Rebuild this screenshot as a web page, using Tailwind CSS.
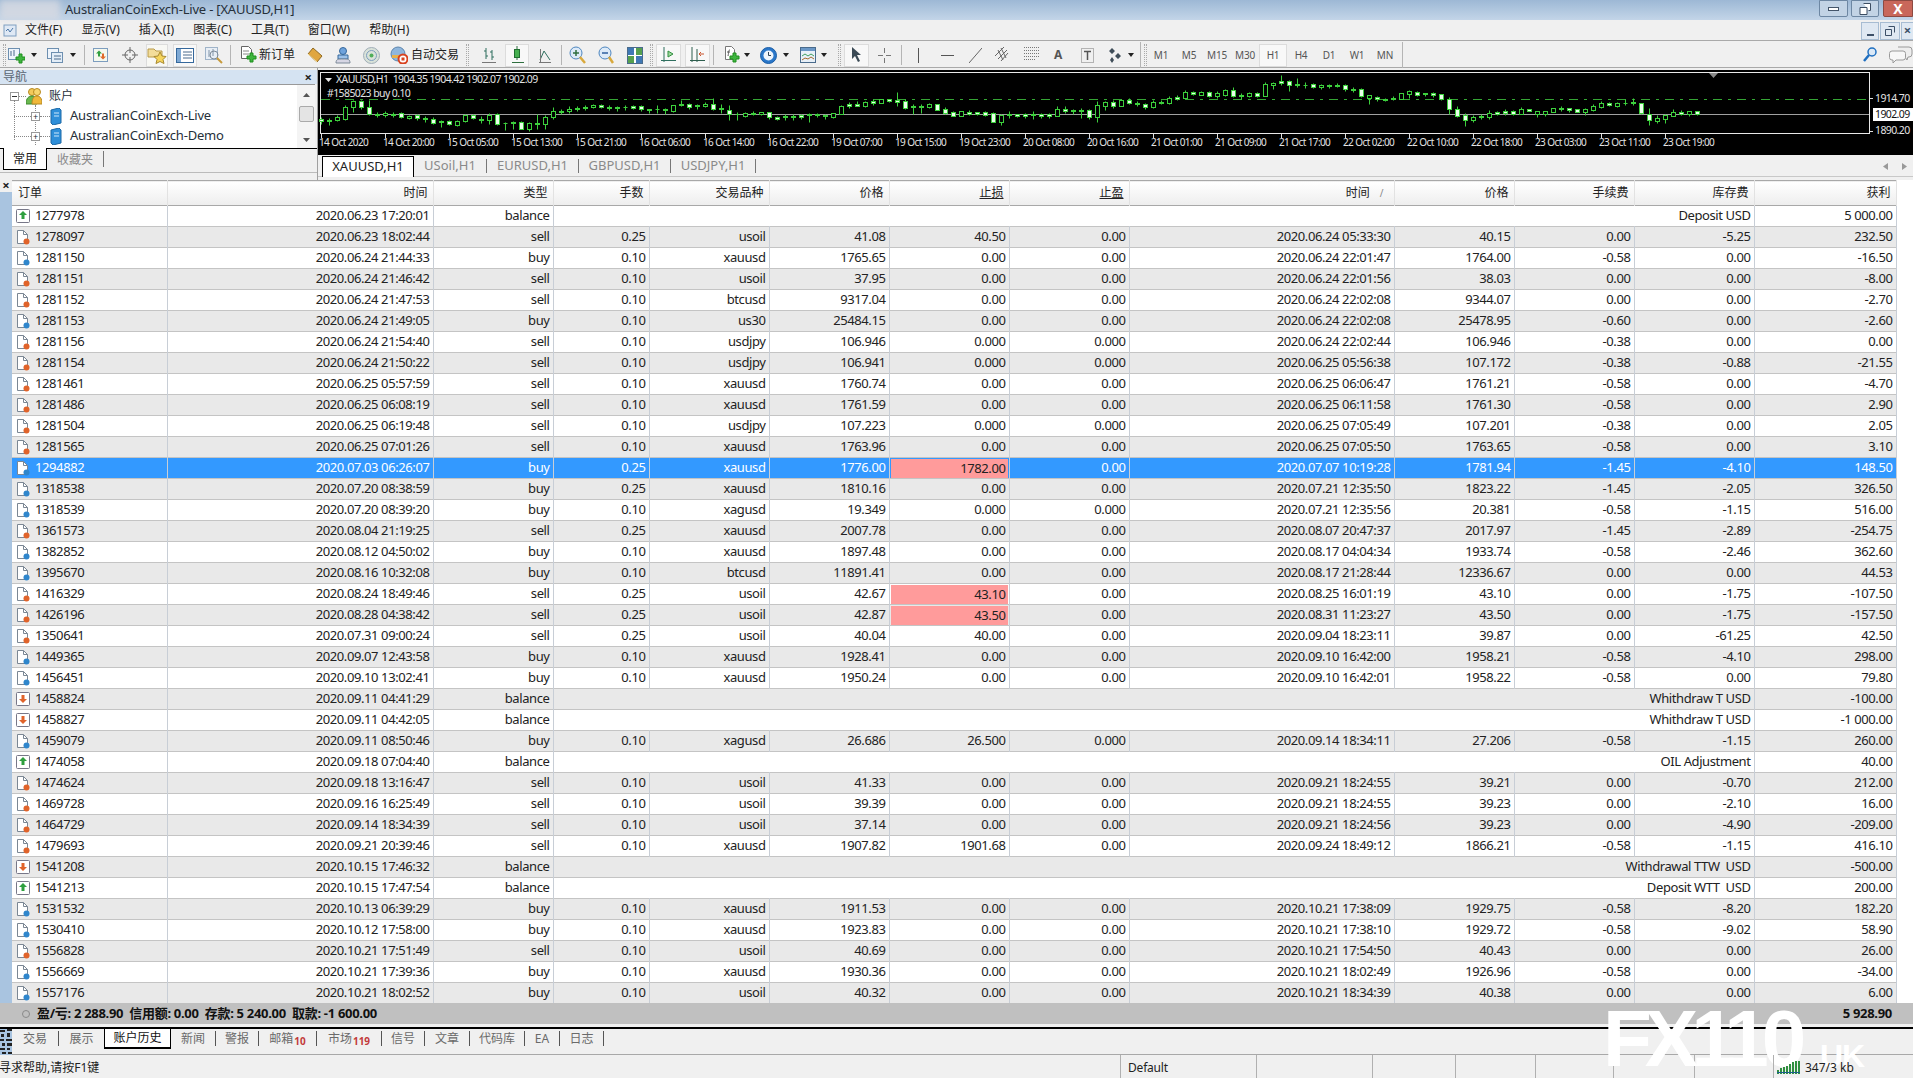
<!DOCTYPE html>
<html lang="zh">
<head>
<meta charset="UTF-8" />
<title>AustralianCoinExch-Live - [XAUUSD,H1]</title>
<script src="https://cdn.jsdelivr.net/npm/@tailwindcss/browser@4"></script>
</head>
<body class="bg-[#f0f0f0] w-[1913px] h-[1078px] overflow-hidden relative font-['Noto_Sans','Noto_Sans_CJK_SC',sans-serif] text-[13px] text-[#222]">

  <!-- title bar -->
  <div class="h-[20px] flex items-center bg-gradient-to-b from-[#9db8d5] to-[#c3d5e8] relative">
    <div class="w-[60px] h-[20px] bg-[#d8dbe2]/80 blur-[3px]"></div>
    <span class="ml-[5px] tracking-[-0.2px] text-[#26303a]">AustralianCoinExch-Live - [XAUUSD,H1]</span>
    <div class="ml-auto flex h-[17px] self-start">
      <div class="w-[29px] border border-[#6d87a3] rounded-b-[2px] bg-[#c2d3e5] flex items-center justify-center"><div class="w-[11px] h-[4px] border border-[#44556a] bg-white"></div></div>
      <div class="ml-[3px] w-[28px] border border-[#6d87a3] rounded-b-[2px] bg-[#c2d3e5] flex items-center justify-center">
        <svg width="12" height="12"><path d="M4.5 .5h7v7h-2M1 4.500h7v7H1z" fill="#fff" stroke="#3c4d62"/></svg>
      </div>
      <div class="ml-[4px] w-[30px] border border-[#8d4a42] rounded-bl-[2px] bg-[#c9675a] flex items-center justify-center text-white font-bold text-[14px] leading-none">X</div>
    </div>
  </div>

  <!-- menu -->
  <div class="h-[20px] flex items-center bg-[#f0f0f0] text-[12px]">
    <svg class="ml-[3px]" width="14" height="14"><rect x="1" y="2" width="12" height="11" fill="#dfe9f5" stroke="#7d9dbf"/><path d="M3 8l2-2 2 3 3-4" fill="none" stroke="#4d78a8"/></svg>
    <span class="ml-[8px]">文件(F)</span>
    <span class="ml-[19px]">显示(V)</span>
    <span class="ml-[19px]">插入(I)</span>
    <span class="ml-[19px]">图表(C)</span>
    <span class="ml-[19px]">工具(T)</span>
    <span class="ml-[19px]">窗口(W)</span>
    <span class="ml-[19px]">帮助(H)</span>
    <div class="ml-auto flex h-[18px] mt-[1px]">
      <div class="w-[18px] border border-[#a7bcd2] bg-[#dfe8f2] flex items-end justify-center pb-[3px]"><div class="w-[7px] h-[2px] bg-[#3d5068]"></div></div>
      <div class="ml-[1px] w-[20px] border border-[#a7bcd2] bg-[#dfe8f2] flex items-center justify-center"><svg width="10" height="10"><path d="M3.500 .5h6v6M.5 3.500h6v6h-6z" fill="none" stroke="#3d5068"/></svg></div>
      <div class="ml-[1px] w-[12px] border-l border-y border-[#a7bcd2] bg-[#dfe8f2] flex items-center justify-center font-bold text-[13px] leading-none text-[#3d5068]">×</div>
    </div>
  </div>

  <!-- toolbar -->
  <div class="h-[28px] pt-[2px] border-y border-[#a9a9a9] flex items-center bg-[#f0f0f0] text-[12px] text-[#222]">
    <div class="ml-[3px] w-[3px] h-[22px] border-x border-dotted border-[#aaa]"></div>
    <svg class="ml-[2px]" width="17" height="17"><rect x=".5" y="1.500" width="11" height="11" fill="#eef4fb" stroke="#6d8fb0"/><path d="M3 4v5M6 3v6" stroke="#4a6b8c"/><path d="M11 7v3H8v3h3v3h3v-3h3v-3h-3V7z" fill="#3fb53f" stroke="#1f8f1f"/></svg>
    <svg class="ml-[6px]" width="6" height="4"><path d="M0 0h6L3 4z" fill="#222"/></svg>
    <svg class="ml-[10px]" width="16" height="17"><rect x=".5" y="1.500" width="11" height="10" fill="#eef4fb" stroke="#6d8fb0"/><rect x="4.500" y="5.500" width="11" height="10" fill="#e3edf7" stroke="#6d8fb0"/><path d="M7 9h7M7 12h7" stroke="#4a6b8c"/></svg>
    <svg class="ml-[7px]" width="6" height="4"><path d="M0 0h6L3 4z" fill="#222"/></svg>
    <div class="ml-[8px] w-px h-[20px] bg-[#b5b5b5]"></div>
    <svg class="ml-[8px]" width="15" height="16"><rect x=".5" y="1.500" width="14" height="13" fill="#f4f8ee" stroke="#7d9dbf"/><path d="M6 3.500l-3 3h2v3h2v-3h2z" fill="#2f9f3f"/><path d="M10 12.500l3-3h-2v-3H9v3H7z" fill="#e06a2a"/></svg>
    <svg class="ml-[14px]" width="16" height="16" fill="none" stroke="#666"><circle cx="8" cy="8" r="5"/><path d="M8 0v6M8 10v6M0 8h6M10 8h6"/></svg>
    <div class="ml-[8px] w-[22px] h-[23px] border border-[#dcdcdc] bg-[#f8f8f4] flex items-center justify-center">
      <svg width="20" height="18"><path d="M1 3h6l2 2h6v6H1z" fill="#f3dd9a" stroke="#b89a4a"/><path d="M13 6l2 4 4 .5-3 3 1 4-4-2-4 2 1-4-3-3 4-.5z" fill="#f6d55c" stroke="#a8892f"/></svg>
    </div>
    <div class="ml-[5px] w-[24px] h-[23px] border border-[#dcdcdc] bg-[#f8f8f8] flex items-center justify-center">
      <svg width="18" height="15"><rect x=".5" y=".5" width="17" height="14" fill="#fff" stroke="#35689c"/><rect x="1" y="1" width="4" height="13" fill="#7fa9d4"/><path d="M7 4h9M7 7h9M7 10h9" stroke="#4a6b8c"/></svg>
    </div>
    <svg class="ml-[8px]" width="18" height="18" fill="none"><rect x=".5" y="1.500" width="12" height="12" fill="#e8eef5" stroke="#9fb3c8"/><path d="M4 4v7M8 3v7" stroke="#8094a8"/><circle cx="9" cy="9" r="4" stroke="#7d8a99"/><path d="M12 12l5 5" stroke="#c79a3c" stroke-width="2"/></svg>
    <div class="ml-[7px] w-px h-[20px] bg-[#b5b5b5]"></div>
    <svg class="ml-[9px]" width="17" height="18"><path d="M1.500 .5h7l3 3v9h-10z" fill="#fff" stroke="#666"/><path d="M3 5h6M3 8h6" stroke="#888"/><path d="M10 7v3H7v3h3v3h3v-3h3v-3h-3V7z" fill="#3fb53f" stroke="#1f8f1f"/></svg>
    <span class="ml-[2px] w-[37px] whitespace-nowrap">新订单</span>
    <svg class="ml-[11px]" width="16" height="16"><path d="M6 1l9 8-5 6-9-8z" fill="#e0a63f" stroke="#8f6a22"/><path d="M1 7l9 8" stroke="#f6e2a8"/></svg>
    <svg class="ml-[12px]" width="16" height="17"><circle cx="8" cy="4" r="3.500" fill="#6fa3dc" stroke="#35689c"/><path d="M3 8h10v4H3z" fill="#9cc2ea" stroke="#35689c"/><path d="M1 16c0-4 2-4 7-4s7 0 7 4z" fill="#d6d6e4" stroke="#7d8a99"/></svg>
    <svg class="ml-[12px]" width="17" height="17" fill="none"><circle cx="8.500" cy="8.500" r="8" fill="#d9e2d9" stroke="#a0aeb8"/><circle cx="8.500" cy="8.500" r="5" stroke="#7d9dbf"/><circle cx="8.500" cy="8.500" r="2" fill="#4fae5a"/></svg>
    <svg class="ml-[10px]" width="18" height="18"><circle cx="8" cy="8" r="7" fill="#8fb6dc" stroke="#5b84ad"/><path d="M2 9h13v3H2z" fill="#e8b14a"/><circle cx="13" cy="13" r="4.500" fill="#fff" stroke="#d8421f" stroke-width="2"/><rect x="11.500" y="11.500" width="3" height="3" fill="#d8421f"/></svg>
    <span class="ml-[3px] w-[47px] whitespace-nowrap">自动交易</span>
    <div class="ml-[8px] w-[3px] h-[22px] border-x border-dotted border-[#aaa]"></div>
    <svg class="ml-[13px]" width="14" height="18" fill="none" stroke="#2f6f5f"><path d="M4 2v11M2 5h2M4 10h2M10 4v10M8 6h2M10 11h2"/><path d="M0 16.500h14" stroke="#777"/></svg>
    <div class="ml-[9px] w-[24px] h-[23px] border border-[#dcdcdc] bg-[#f8f8f8] flex items-center justify-center">
      <svg width="14" height="18"><path d="M7 0v14M2 16.500h12" stroke="#2f6f3f"/><rect x="4.500" y="3.500" width="5" height="8" fill="#46b04f" stroke="#1f6f2f"/></svg>
    </div>
    <svg class="ml-[10px]" width="12" height="17" fill="none"><path d="M1 13l4-9 6 9" stroke="#2f6f5f"/><path d="M0 15.500h12M1.500 2v14" stroke="#777"/></svg>
    <div class="ml-[10px] w-px h-[20px] bg-[#b5b5b5]"></div>
    <svg class="ml-[7px]" width="17" height="18" fill="none"><circle cx="7" cy="7" r="6" fill="#dceaf8" stroke="#4e86bf"/><path d="M4 7h6M7 4v6" stroke="#2f6f3f" stroke-width="1.500"/><path d="M11 11l5 6" stroke="#d9a93c" stroke-width="2.500"/></svg>
    <svg class="ml-[12px]" width="16" height="18" fill="none"><circle cx="7" cy="7" r="6" fill="#dceaf8" stroke="#4e86bf"/><path d="M4 7h6" stroke="#2f5f9f" stroke-width="1.500"/><path d="M11 11l4 6" stroke="#d9a93c" stroke-width="2.500"/></svg>
    <svg class="ml-[13px]" width="16" height="17"><rect x=".5" y=".5" width="15" height="16" fill="#fff" stroke="#4a6b8c"/><rect x="1" y="1" width="6" height="7" fill="#3f78b5"/><rect x="9" y="1" width="6" height="7" fill="#55a04f"/><rect x="1" y="9" width="6" height="7" fill="#55a04f"/><rect x="9" y="9" width="6" height="7" fill="#3f78b5"/></svg>
    <div class="ml-[7px] w-[3px] h-[22px] border-x border-dotted border-[#aaa]"></div>
    <div class="ml-[3px] w-[25px] h-[23px] border border-[#dcdcdc] bg-[#f8f8f8] flex items-center justify-center">
      <svg width="15" height="16" fill="none"><path d="M3 0v15M0 13.500h15" stroke="#2f6f5f"/><path d="M7 4l5 3-5 3z" fill="#9fd89f" stroke="#2f8f3f"/></svg>
    </div>
    <div class="ml-[4px] w-[25px] h-[23px] border border-[#dcdcdc] bg-[#f8f8f8] flex items-center justify-center">
      <svg width="15" height="16" fill="none"><path d="M2 0v15M7 2v13M0 13.500h15" stroke="#2f5f4f"/><path d="M14 7H9M11 5L9 7l2 2" stroke="#c9552f"/></svg>
    </div>
    <div class="ml-[3px] w-px h-[20px] bg-[#b5b5b5]"></div>
    <svg class="ml-[10px]" width="16" height="18"><path d="M1.500 .5h6l3 3v10h-9z" fill="#fff" stroke="#777"/><path d="M6 4c-2 0-1 2-2 6M3 6h3" fill="none" stroke="#555"/><path d="M9 7v3H6v3h3v3h3v-3h3v-3h-3V7z" fill="#3fb53f" stroke="#1f8f1f"/></svg>
    <svg class="ml-[4px]" width="6" height="4"><path d="M0 0h6L3 4z" fill="#222"/></svg>
    <svg class="ml-[10px]" width="17" height="17" fill="none"><circle cx="8.500" cy="8.500" r="8" fill="#2a77c9" stroke="#1c5ea6"/><circle cx="8.500" cy="8.500" r="5" fill="#eef5fc"/><path d="M8.500 5v3.500H11" stroke="#345"/></svg>
    <svg class="ml-[6px]" width="6" height="4"><path d="M0 0h6L3 4z" fill="#222"/></svg>
    <svg class="ml-[11px]" width="16" height="16" fill="none"><rect x=".5" y=".5" width="15" height="15" fill="#e8f0f8" stroke="#4a6b8c"/><rect x="1" y="1" width="14" height="3" fill="#6a97c6"/><path d="M2 9l3-2 3 2 3-2 3 2" stroke="#3f9f5f"/><path d="M2 13l3-2 3 1 3-2 3 2" stroke="#a56a2f"/></svg>
    <svg class="ml-[5px]" width="6" height="4"><path d="M0 0h6L3 4z" fill="#222"/></svg>
    <div class="ml-[11px] w-[3px] h-[22px] border-x border-dotted border-[#aaa]"></div>
    <div class="ml-[3px] w-[25px] h-[23px] border border-[#dcdcdc] bg-[#f8f8f8] flex items-center justify-center">
      <svg width="11" height="16"><path d="M1 0l9 8H6l3 6-2 1-3-6-3 3z" fill="#3b4a55"/></svg>
    </div>
    <svg class="ml-[9px]" width="13" height="15" stroke="#777"><path d="M6.500 0v5M6.500 10v5M0 7.500h5M8 7.500h5"/></svg>
    <div class="ml-[10px] w-px h-[20px] bg-[#b5b5b5]"></div>
    <svg class="ml-[12px]" width="8" height="15" stroke="#555"><path d="M4.500 0v15"/></svg>
    <svg class="ml-[19px]" width="13" height="3" stroke="#555"><path d="M0 1.500h13"/></svg>
    <svg class="ml-[15px]" width="13" height="15" stroke="#666" fill="none"><path d="M0 15L13 0"/></svg>
    <svg class="ml-[13px]" width="15" height="18" stroke="#666" fill="none"><path d="M0 10l9-9M3 13l9-9M6 15l7-8M3 4l5 10M6 2l5 10"/></svg>
    <svg class="ml-[14px]" width="15" height="18" stroke="#777" stroke-dasharray="1 1"><path d="M0 1.500h15M0 4.500h15M0 7.500h15M0 10.500h15M0 13.500h11"/></svg>
    <span class="ml-[15px] w-[10px] text-[#555] font-bold text-[12px]">A</span>
    <svg class="ml-[17px]" width="13" height="15" fill="none"><rect x=".5" y=".5" width="12" height="14" stroke="#777" stroke-dasharray="1 1"/><path d="M3 3.500h7M6.500 3.500V12" stroke="#555" stroke-width="1.500"/></svg>
    <svg class="ml-[14px]" width="14" height="15"><path d="M4 0l3 3-3 3-3-3zM10 5l3 3-3 3-3-3zM4 9l2 3-2 3-2-3z" fill="#3f4d58"/></svg>
    <svg class="ml-[6px]" width="6" height="4"><path d="M0 0h6L3 4z" fill="#222"/></svg>
    <div class="ml-[6px] w-px h-[26px] bg-[#b5b5b5]"></div>
    <div class="ml-[3px] w-[3px] h-[22px] border-x border-dotted border-[#aaa]"></div>
    <div class="flex items-center text-[10px] text-[#555] text-center tracking-[-0.2px]">
      <span class="w-[28px]">M1</span><span class="w-[28px]">M5</span><span class="w-[28px]">M15</span><span class="w-[28px]">M30</span>
      <span class="w-[28px] h-[23px] leading-[21px] border border-[#dcdcdc] bg-[#f8f8f8]">H1</span>
      <span class="w-[28px]">H4</span><span class="w-[28px]">D1</span><span class="w-[28px]">W1</span><span class="w-[28px]">MN</span>
    </div>
    <div class="ml-[3px] w-px h-[26px] bg-[#b5b5b5]"></div>
    <svg class="ml-auto" width="14" height="16" fill="none"><circle cx="9" cy="5" r="4" fill="#dbe9f7" stroke="#1f6fc0" stroke-width="1.500"/><path d="M6 8l-5 6" stroke="#1f6fc0" stroke-width="2.500"/></svg>
    <svg class="ml-[12px]" width="24" height="18" fill="none" stroke="#9a9a9a"><path d="M9 1h11a3 3 0 013 3v4a3 3 0 01-3 3h-1l-1 3-2-3" fill="#eee"/><path d="M3 5h11a2.500 2.500 0 012.500 2.500v4A2.500 2.500 0 0114 14H7l-3 3v-3H3a2.500 2.500 0 01-2.500-2.500v-4A2.500 2.500 0 013 5z" fill="#f7f7f7"/></svg>
  </div>

  <!-- navigator + chart -->
  <div class="h-[112px] flex">
    <div class="w-[318px] pt-[2px] border-r border-[#a0a0a0] flex flex-col">
      <div class="h-[14px] flex items-center justify-between bg-[#d5e3f2] text-[12px] text-[#5a6672] pl-[3px] pr-[5px]">
        <span>导航</span><span class="font-bold text-[#222] text-[13px] leading-none">×</span>
      </div>
      <div class="mr-[2px] h-[64px] bg-white border-t border-[#999] relative flex">
        <div class="absolute left-[14px] top-[15px] h-[40px] border-l border-dotted border-[#888]"></div>
        <div class="absolute left-[35px] top-[20px] h-[40px] border-l border-dotted border-[#888]"></div>
        <div class="flex-1 text-[#26303a]">
          <div class="h-[20px] mt-[1px] flex items-center">
            <div class="ml-[10px] w-[9px] h-[9px] border border-[#999] flex items-center justify-center"><div class="w-[5px] h-px bg-[#333]"></div></div>
            <div class="w-[7px] border-t border-dotted border-[#888]"></div>
            <svg width="16" height="18"><circle cx="6" cy="5" r="3.500" fill="#f3c95a" stroke="#b88a22"/><circle cx="11" cy="5" r="3.500" fill="#f6d66e" stroke="#b88a22"/><path d="M0 17c0-6 3-8 6-8s5 2 5 8z" fill="#6ab84f" stroke="#3f8a2f"/><path d="M6 17c0-6 2-8 5-8s5 2 5 8z" fill="#f0b83a" stroke="#b88a22"/></svg>
            <span class="ml-[7px] text-[12px]">账户</span>
          </div>
          <div class="h-[20px] flex items-center">
            <div class="ml-[14px] w-[17px] border-t border-dotted border-[#888]"></div>
            <div class="relative w-[9px] h-[9px] border border-[#999] bg-white flex items-center justify-center text-[9px] leading-none">+</div>
            <div class="w-[10px] border-t border-dotted border-[#888]"></div>
            <svg width="12" height="17"><path d="M1 2l8-2 2 2v13l-8 2-2-2z" fill="#2f8fd9" stroke="#1c68a6"/><path d="M4 5h5M4 8h5" stroke="#cfe8fb"/></svg>
            <span class="ml-[8px] tracking-[-0.2px]">AustralianCoinExch-Live</span>
          </div>
          <div class="h-[20px] flex items-center">
            <div class="ml-[14px] w-[17px] border-t border-dotted border-[#888]"></div>
            <div class="relative w-[9px] h-[9px] border border-[#999] bg-white flex items-center justify-center text-[9px] leading-none">+</div>
            <div class="w-[10px] border-t border-dotted border-[#888]"></div>
            <svg width="12" height="17"><path d="M1 2l8-2 2 2v13l-8 2-2-2z" fill="#2f8fd9" stroke="#1c68a6"/><path d="M4 5h5M4 8h5" stroke="#cfe8fb"/></svg>
            <span class="ml-[8px] tracking-[-0.2px]">AustralianCoinExch-Demo</span>
          </div>
        </div>
        <div class="w-[18px] flex flex-col items-center bg-[#f4f4f4]">
          <svg class="mt-[8px]" width="7" height="4"><path d="M0 4h7L3.500 0z" fill="#555"/></svg>
          <div class="mt-[9px] w-[15px] h-[16px] bg-[#e4e4e4] border border-[#aaa] rounded-[2px]"></div>
          <svg class="mt-[16px]" width="7" height="4"><path d="M0 0h7L3.500 4z" fill="#555"/></svg>
        </div>
      </div>
      <div class="h-[24px] border-t border-black flex text-[12px]">
        <div class="ml-[3px] w-[44px] h-[22px] -mt-px bg-white border-x border-b border-black flex items-center justify-center">常用</div>
        <span class="ml-[10px] leading-[22px] text-[#8a8a8a]">收藏夹</span>
        <div class="ml-[10px] mt-[2px] w-px h-[16px] bg-[#777]"></div>
      </div>
      <div class="h-[7px] border-t border-[#bbb]"></div>
    </div>

    <div class="flex-1 min-w-0">
      <div id="chart" class="mt-[2px] h-[85px] bg-black relative overflow-hidden text-[#e4e4e4] text-[10.500px] tracking-[-0.6px] leading-none whitespace-nowrap"></div>
      <div class="h-[21px] mt-[1px] flex items-center text-[13px] text-[#8a8a8a] bg-[#f0f0f0] border-b border-[#c8c8c8]">
        <div class="ml-[4px] w-[92px] h-[21px] bg-white border-t border-x border-black text-[#222] flex items-center justify-center">XAUUSD,H1</div>
        <div class="w-[73px] flex items-center justify-center border-r border-[#777] h-[14px]">USoil,H1</div>
        <div class="w-[92px] flex items-center justify-center border-r border-[#777] h-[14px]">EURUSD,H1</div>
        <div class="w-[92px] flex items-center justify-center border-r border-[#777] h-[14px]">GBPUSD,H1</div>
        <div class="w-[85px] flex items-center justify-center border-r border-[#777] h-[14px]">USDJPY,H1</div>
        <svg class="ml-auto" width="5" height="7"><path d="M5 0v7L0 3.500z" fill="#999"/></svg>
        <svg class="ml-[14px] mr-[6px]" width="5" height="7"><path d="M0 0v7l5-3.500z" fill="#999"/></svg>
      </div>
    </div>
  </div>

  <!-- account history terminal -->
  <div class="h-[847px] flex flex-col">
    <div class="flex h-[823px]">
      <div class="w-[12px] flex flex-col">
        <div class="h-[12px] text-[13px] font-bold leading-[10px] text-center">×</div>
        <div class="flex-1 bg-[#a9c4e0]"></div>
      </div>
      <div class="flex-1 bg-white">
        <table class="table-fixed border-collapse w-[1884px] text-[#222] tracking-[-0.4px]">
          <colgroup>
            <col class="w-[155px]"><col class="w-[266px]"><col class="w-[120px]"><col class="w-[96px]"><col class="w-[120px]"><col class="w-[120px]"><col class="w-[120px]"><col class="w-[120px]"><col class="w-[265px]"><col class="w-[120px]"><col class="w-[120px]"><col class="w-[120px]"><col class="w-[142px]">
          </colgroup>
          <thead>
            <tr class="h-[25px] bg-gradient-to-b from-white to-[#eeeeee] border-y border-[#a8a8a8] font-normal text-[12px] tracking-normal">
              <th class="font-normal text-left pl-[6px] border-r border-[#e2e2e2]">订单</th>
              <th class="font-normal text-right pr-[5px] border-r border-[#e2e2e2]">时间</th>
              <th class="font-normal text-right pr-[5px] border-r border-[#e2e2e2]">类型</th>
              <th class="font-normal text-right pr-[5px] border-r border-[#e2e2e2]">手数</th>
              <th class="font-normal text-right pr-[5px] border-r border-[#e2e2e2]">交易品种</th>
              <th class="font-normal text-right pr-[5px] border-r border-[#e2e2e2]">价格</th>
              <th class="font-normal text-right pr-[5px] border-r border-[#e2e2e2] underline">止损</th>
              <th class="font-normal text-right pr-[5px] border-r border-[#e2e2e2] underline">止盈</th>
              <th class="font-normal text-right pr-[10px] border-r border-[#e2e2e2]">时间<span class="ml-[10px] text-[#888] text-[10px]">/</span></th>
              <th class="font-normal text-right pr-[5px] border-r border-[#e2e2e2]">价格</th>
              <th class="font-normal text-right pr-[5px] border-r border-[#e2e2e2]">手续费</th>
              <th class="font-normal text-right pr-[5px] border-r border-[#e2e2e2]">库存费</th>
              <th class="font-normal text-right pr-[5px] border-r border-[#e2e2e2]">获利</th>
            </tr>
          </thead>
          <tbody id="rows"></tbody>
        </table>
      </div>
    </div>
    <div class="h-[21px] pt-[1px] bg-[#c0c0c0] flex items-center font-bold pl-[21px] pr-[21px] text-[#111] tracking-[-0.3px]">
      <svg width="10" height="10" fill="none"><circle cx="5" cy="5" r="3.500" stroke="#8a8a8a"/></svg>
      <span class="ml-[6px] whitespace-pre">盈/亏: 2 288.90  信用额: 0.00  存款: 5 240.00  取款: -1 600.00</span>
      <span class="ml-auto">5 928.90</span>
    </div>
    <div class="h-[3px]"></div>
  </div>

  <!-- terminal tabs -->
  <div class="h-[28px] pb-[6px] border-t-2 border-black border-b border-b-[#a8a8a8] flex items-center text-[12px] text-[#6a6a6a]">
    <svg width="12" height="26" class="self-start shrink-0"><rect width="12" height="26" fill="#a9c4e0"/><path d="M0 1h5v2H0zM7 0h5v2H7zM1 5h3v3H1zM7 4h3v4H7zM0 10h4v2H0zM6 10h6v2H6zM2 14h3v3H2zM7 14h5v3H7zM0 19h5v2H0zM7 19h3v2H7zM2 23h4v2H2zM8 23h4v2H8z" fill="#222"/></svg>
    <div class="w-[47px] h-[15px] flex items-center justify-center border-r border-[#555]">交易</div>
    <div class="w-[45px] h-[15px] flex items-center justify-center">展示</div>
    <div class="w-[67px] h-[20px] self-start bg-white border-x border-b-2 border-black text-[#111] flex items-center justify-center">账户历史</div>
    <div class="w-[45px] h-[15px] flex items-center justify-center border-r border-[#555]">新闻</div>
    <div class="w-[43px] h-[15px] flex items-center justify-center border-r border-[#555]">警报</div>
    <div class="w-[58px] h-[15px] flex items-center justify-center border-r border-[#555]">邮箱<span class="text-[#c23b3b] font-bold text-[10px] mt-[6px] ml-[1px]">10</span></div>
    <div class="w-[65px] h-[15px] flex items-center justify-center border-r border-[#555]">市场<span class="text-[#c23b3b] font-bold text-[10px] mt-[6px] ml-[1px]">119</span></div>
    <div class="w-[43px] h-[15px] flex items-center justify-center border-r border-[#555]">信号</div>
    <div class="w-[45px] h-[15px] flex items-center justify-center border-r border-[#555]">文章</div>
    <div class="w-[55px] h-[15px] flex items-center justify-center border-r border-[#555]">代码库</div>
    <div class="w-[35px] h-[15px] flex items-center justify-center border-r border-[#555]">EA</div>
    <div class="w-[44px] h-[15px] flex items-center justify-center border-r border-[#555]">日志</div>
  </div>

  <!-- status bar -->
  <div class="h-[23px] flex items-center text-[12px] text-[#222]">
    <div class="w-[1121px] pt-[2px] whitespace-nowrap -ml-[1px]">寻求帮助,请按F1键</div>
    <div class="w-[136px] h-full flex items-center pl-[7px] pt-[2px] border-l border-[#b0b0b0] tracking-[-0.2px]">Default</div>
    <div class="w-[116px] h-full border-l border-[#b0b0b0]"></div>
    <div class="w-[83px] h-full border-l border-[#b0b0b0]"></div>
    <div class="w-[80px] h-full border-l border-[#b0b0b0]"></div>
    <div class="w-[78px] h-full border-l border-[#b0b0b0]"></div>
    <div class="w-[81px] h-full border-l border-[#b0b0b0]"></div>
    <div class="w-[79px] h-full border-l border-[#b0b0b0]"></div>
    <div class="flex-1 h-full flex items-center border-l border-[#b0b0b0] pl-[3px] pt-[2px] relative z-10">
      <svg width="24" height="13"><path d="M0 9h2v4H0zM3 7h2v6H3zM6 6h2v7H6zM9 5h2v8H9zM12 3h2v10h-2zM15 1h2v12h-2zM18 0h2v13h-2zM21 0h2v13h-2z" fill="#2f8f3f"/><path d="M0 11h23v1H0z" fill="#1c5f8f"/></svg>
      <span class="ml-[4px] whitespace-nowrap">347/3 kb</span>
    </div>
  </div>

  <!-- watermark -->
  <div class="absolute left-[1603px] top-[1010px] text-white font-['Liberation_Sans'] font-bold text-[80px] leading-[58px] tracking-[-7px] whitespace-nowrap">FX110</div>
  <div class="absolute left-[1812px] top-[1044px] text-white font-['Liberation_Sans'] font-bold text-[32px] leading-[24px] tracking-[-1px] whitespace-nowrap">.UK</div>

<script>
  // account history rows: ticket, open time, type, then the remaining columns
  const rows = `
1277978|2020.06.23 17:20:01|balance|Deposit USD|5 000.00
1278097|2020.06.23 18:02:44|sell|0.25|usoil|41.08|40.50|0.00|2020.06.24 05:33:30|40.15|0.00|-5.25|232.50
1281150|2020.06.24 21:44:33|buy|0.10|xauusd|1765.65|0.00|0.00|2020.06.24 22:01:47|1764.00|-0.58|0.00|-16.50
1281151|2020.06.24 21:46:42|sell|0.10|usoil|37.95|0.00|0.00|2020.06.24 22:01:56|38.03|0.00|0.00|-8.00
1281152|2020.06.24 21:47:53|sell|0.10|btcusd|9317.04|0.00|0.00|2020.06.24 22:02:08|9344.07|0.00|0.00|-2.70
1281153|2020.06.24 21:49:05|buy|0.10|us30|25484.15|0.00|0.00|2020.06.24 22:02:08|25478.95|-0.60|0.00|-2.60
1281156|2020.06.24 21:54:40|sell|0.10|usdjpy|106.946|0.000|0.000|2020.06.24 22:02:44|106.946|-0.38|0.00|0.00
1281154|2020.06.24 21:50:22|sell|0.10|usdjpy|106.941|0.000|0.000|2020.06.25 05:56:38|107.172|-0.38|-0.88|-21.55
1281461|2020.06.25 05:57:59|sell|0.10|xauusd|1760.74|0.00|0.00|2020.06.25 06:06:47|1761.21|-0.58|0.00|-4.70
1281486|2020.06.25 06:08:19|sell|0.10|xauusd|1761.59|0.00|0.00|2020.06.25 06:11:58|1761.30|-0.58|0.00|2.90
1281504|2020.06.25 06:19:48|sell|0.10|usdjpy|107.223|0.000|0.000|2020.06.25 07:05:49|107.201|-0.38|0.00|2.05
1281565|2020.06.25 07:01:26|sell|0.10|xauusd|1763.96|0.00|0.00|2020.06.25 07:05:50|1763.65|-0.58|0.00|3.10
1294882|2020.07.03 06:26:07|buy|0.25|xauusd|1776.00|1782.00|0.00|2020.07.07 10:19:28|1781.94|-1.45|-4.10|148.50
1318538|2020.07.20 08:38:59|buy|0.25|xauusd|1810.16|0.00|0.00|2020.07.21 12:35:50|1823.22|-1.45|-2.05|326.50
1318539|2020.07.20 08:39:20|buy|0.10|xagusd|19.349|0.000|0.000|2020.07.21 12:35:56|20.381|-0.58|-1.15|516.00
1361573|2020.08.04 21:19:25|sell|0.25|xauusd|2007.78|0.00|0.00|2020.08.07 20:47:37|2017.97|-1.45|-2.89|-254.75
1382852|2020.08.12 04:50:02|buy|0.10|xauusd|1897.48|0.00|0.00|2020.08.17 04:04:34|1933.74|-0.58|-2.46|362.60
1395670|2020.08.16 10:32:08|buy|0.10|btcusd|11891.41|0.00|0.00|2020.08.17 21:28:44|12336.67|0.00|0.00|44.53
1416329|2020.08.24 18:49:46|sell|0.25|usoil|42.67|43.10|0.00|2020.08.25 16:01:19|43.10|0.00|-1.75|-107.50
1426196|2020.08.28 04:38:42|sell|0.25|usoil|42.87|43.50|0.00|2020.08.31 11:23:27|43.50|0.00|-1.75|-157.50
1350641|2020.07.31 09:00:24|sell|0.25|usoil|40.04|40.00|0.00|2020.09.04 18:23:11|39.87|0.00|-61.25|42.50
1449365|2020.09.07 12:43:58|buy|0.10|xauusd|1928.41|0.00|0.00|2020.09.10 16:42:00|1958.21|-0.58|-4.10|298.00
1456451|2020.09.10 13:02:41|buy|0.10|xauusd|1950.24|0.00|0.00|2020.09.10 16:42:01|1958.22|-0.58|0.00|79.80
1458824|2020.09.11 04:41:29|balance|Whithdraw T USD|-100.00
1458827|2020.09.11 04:42:05|balance|Whithdraw T USD|-1 000.00
1459079|2020.09.11 08:50:46|buy|0.10|xagusd|26.686|26.500|0.000|2020.09.14 18:34:11|27.206|-0.58|-1.15|260.00
1474058|2020.09.18 07:04:40|balance|OIL Adjustment|40.00
1474624|2020.09.18 13:16:47|sell|0.10|usoil|41.33|0.00|0.00|2020.09.21 18:24:55|39.21|0.00|-0.70|212.00
1469728|2020.09.16 16:25:49|sell|0.10|usoil|39.39|0.00|0.00|2020.09.21 18:24:55|39.23|0.00|-2.10|16.00
1464729|2020.09.14 18:34:39|sell|0.10|usoil|37.14|0.00|0.00|2020.09.21 18:24:56|39.23|0.00|-4.90|-209.00
1479693|2020.09.21 20:39:46|sell|0.10|xauusd|1907.82|1901.68|0.00|2020.09.24 18:49:12|1866.21|-0.58|-1.15|416.10
1541208|2020.10.15 17:46:32|balance|Withdrawal TTW  USD|-500.00
1541213|2020.10.15 17:47:54|balance|Deposit WTT  USD|200.00
1531532|2020.10.13 06:39:29|buy|0.10|xauusd|1911.53|0.00|0.00|2020.10.21 17:38:09|1929.75|-0.58|-8.20|182.20
1530410|2020.10.12 17:58:00|buy|0.10|xauusd|1923.83|0.00|0.00|2020.10.21 17:38:10|1929.72|-0.58|-9.02|58.90
1556828|2020.10.21 17:51:49|sell|0.10|usoil|40.69|0.00|0.00|2020.10.21 17:54:50|40.43|0.00|0.00|26.00
1556669|2020.10.21 17:39:36|buy|0.10|xauusd|1930.36|0.00|0.00|2020.10.21 18:02:49|1926.96|-0.58|0.00|-34.00
1557176|2020.10.21 18:02:52|buy|0.10|usoil|40.32|0.00|0.00|2020.10.21 18:34:39|40.38|0.00|0.00|6.00
`.trim().split("\n").map(r => r.split("|"));

  const stoppedOut = ["1294882", "1416329", "1426196"];

  function orderIcon(type, isDown) {
    if (type === "balance") {
      const c = isDown ? "#e0632a" : "#2f9f3f";
      const arrow = isDown ? "M7 12L3 8h2.500V4h3v4H11z" : "M7 3l4 4H8.500v4h-3V7H3z";
      return `<svg class="ml-[4px] shrink-0" width="15" height="16"><rect x=".5" y="1.500" width="13" height="13" rx="1" fill="#fff" stroke="#778"/><path d="${arrow}" fill="${c}"/></svg>`;
    }
    const ball = type === "buy" ? "#2f86cc" : "#e0632a";
    return `<svg class="ml-[4px] shrink-0" width="15" height="16"><path d="M1.500 1.500h6l4 4v9h-10z" fill="#fff" stroke="#7b8794"/><path d="M7.500 1.500v4h4" fill="none" stroke="#7b8794"/><circle cx="10.500" cy="12.500" r="3" fill="${ball}"/></svg>`;
  }

  let html = "";
  rows.forEach((r, i) => {
    const selected = r[0] === "1294882";
    const bg = selected ? "bg-[#3399ff] text-white" : i % 2 ? "bg-[#e9e9e9]" : "bg-white";
    const td = "border-r border-[#c8ced6] text-right pr-[3px] overflow-hidden whitespace-pre";
    const isBalance = r[2] === "balance";
    const down = r[r.length - 1].startsWith("-");
    let cells = `<td class="border-r border-[#c8ced6] p-0"><div class="flex items-center">${orderIcon(r[2], down)}<span class="ml-[4px]">${r[0]}</span></div></td>`;
    cells += `<td class="${td}">${r[1]}</td><td class="${td}">${r[2]}</td>`;
    if (isBalance) {
      cells += `<td colspan="9" class="${td}">${r[3]}</td><td class="${td}">${r[4]}</td>`;
    } else {
      r.slice(3).forEach((v, k) => {
        const hit = k === 3 && stoppedOut.includes(r[0]);
        cells += hit
          ? `<td class="${td} p-0 !pr-0 text-[#222]"><div class="h-[19px] mx-px bg-[#ff9b9b] pr-[2px] leading-[19px]">${v}</div></td>`
          : `<td class="${td}">${v}</td>`;
      });
    }
    html += `<tr class="h-[21px] border-b border-[#c4c4c4] ${bg}">${cells}</tr>`;
  });
  document.getElementById("rows").innerHTML = html;

  // candles, as top,bottom,high,low,filled read off the chart (3x pixels from the frame top)
  const candles = `140,146,135,155,1 143,147,137,158,1 134,144,128,148,0 106,140,100,144,0 88,106,85,120,0 88,106,85,112,1 106,125,85,128,1 125,130,120,136,1 123,130,118,134,0 126,128,121,135,1 124,135,119,139,1 131,138,128,140,0 128,138,125,143,1 139,142,133,150,1 142,152,135,157,1 148,150,143,165,1 148,156,143,160,1 146,158,145,163,0 128,146,126,150,0 128,138,127,142,1 140,143,133,152,1 128,143,122,155,0 126,157,123,160,1 152,154,150,175,1 151,153,148,170,1 151,170,148,172,1 153,170,150,178,0 153,155,127,172,1 134,155,128,172,0 118,136,105,140,0 117,120,112,125,1 110,118,102,122,0 107,112,102,116,1 104,109,98,114,1 100,105,96,107,0 99,105,96,107,1 104,108,100,114,1 105,107,101,116,1 104,105,98,114,1 103,108,99,112,1 103,112,99,116,1 112,114,110,122,1 110,112,100,122,1 112,114,108,125,1 100,116,98,120,0 97,99,85,103,1 96,106,92,110,1 100,102,95,112,1 96,102,90,104,0 96,110,78,113,1 108,112,96,122,1 115,126,100,145,1 125,127,120,145,1 122,132,120,136,0 122,127,116,130,1 121,127,120,130,0 121,136,119,140,1 135,140,132,145,1 132,135,127,143,1
131,134,127,143,1 128,134,125,140,1 127,129,122,150,1 127,130,122,136,1 128,133,125,140,1 124,134,122,137,0 102,125,100,127,0 97,103,90,108,1 96,101,88,102,1 91,101,86,105,0 88,92,82,98,1 82,92,82,93,0 82,87,81,90,1 84,90,60,102,1 88,107,82,110,1 102,106,95,127,1 102,104,95,123,1 96,105,93,108,0 97,113,95,115,1 111,122,105,126,1 121,131,118,133,1 118,131,117,133,0 120,127,114,130,1 121,127,120,129,1 121,128,118,133,1 122,149,120,151,1 130,150,127,160,0 125,130,117,137,1 127,131,126,134,1 126,132,122,137,1 127,129,116,140,1 126,133,122,138,1 127,132,123,138,1 112,131,103,133,0 112,116,103,123,1 115,117,110,127,1 115,117,108,138,1 115,134,112,140,1 100,135,88,150,0 91,103,88,114,0 91,102,84,107,1 84,101,82,103,0 84,94,78,96,1 93,97,87,102,1 96,106,93,110,1 91,106,84,108,0 90,94,83,95,1 78,94,72,96,0 74,80,69,84,1 61,77,55,79,0 61,67,57,70,1 60,68,58,70,0 61,71,57,75,1 63,71,56,78,0 54,68,52,71,0 55,73,45,76,1 70,72,63,80,1 63,71,60,74,0 63,73,60,76,1
36,71,30,73,0 32,38,31,50,0 28,32,10,40,1 28,38,25,56,1 36,38,18,44,1 38,40,30,47,1 37,45,33,49,1 38,45,37,50,0 40,42,36,47,1 40,42,34,46,1 40,52,37,56,1 52,54,46,60,1 52,71,49,75,1 70,78,68,95,0 76,82,72,86,1 81,83,77,87,1 78,82,72,84,1 64,81,63,82,0 58,67,55,78,0 59,68,57,71,1 64,67,62,72,1 63,69,60,76,1 67,81,65,83,1 80,112,76,127,1 112,131,102,135,1 128,144,124,162,1 134,144,128,150,0 133,135,126,142,1 123,136,115,140,0 120,125,116,128,1 117,123,112,128,1 118,125,114,128,1 111,125,105,127,0 112,118,112,118,1 118,125,116,134,0 118,127,116,132,0 109,119,108,120,0 109,111,103,118,1 109,114,107,120,1 112,119,111,120,1 111,120,109,130,0 102,113,97,116,0 92,104,87,107,0 93,100,89,102,1 92,102,90,105,0 92,94,82,99,1 90,92,78,100,1 94,124,92,126,1 125,143,108,158,1 138,146,130,152,0 128,140,126,152,0 119,131,112,133,0 120,125,114,128,1 118,127,116,132,0 118,127,117,128,1`
    .trim().split(/\s+/).map(s => s.split(",").map(Number));

  const py = z => Math.round(2 + z / 3) + 0.5;
  let bars = "";
  candles.forEach((c, i) => {
    const x = 3.5 + 8 * i;
    const [t, b, h, l, f] = c;
    bars += `<line x1="${x}" x2="${x}" y1="${py(h)}" y2="${py(l)}" stroke="#3ccf3c"/>`;
    const top = py(t), bot = py(b);
    if (bot - top < 1) bars += `<line x1="${x - 2}" x2="${x + 2}" y1="${top}" y2="${top}" stroke="#3ccf3c"/>`;
    else bars += `<rect x="${x - 2}" y="${top}" width="4" height="${bot - top}" fill="${f ? "#eaffea" : "#000"}" stroke="#3ccf3c"/>`;
  });

  const labels = ["14 Oct 2020","14 Oct 20:00","15 Oct 05:00","15 Oct 13:00","15 Oct 21:00","16 Oct 06:00","16 Oct 14:00","16 Oct 22:00","19 Oct 07:00","19 Oct 15:00","19 Oct 23:00","20 Oct 08:00","20 Oct 16:00","21 Oct 01:00","21 Oct 09:00","21 Oct 17:00","22 Oct 02:00","22 Oct 10:00","22 Oct 18:00","23 Oct 03:00","23 Oct 11:00","23 Oct 19:00"];
  let ticks = "";
  labels.forEach((_, i) => { ticks += `<line x1="${3.5 + 64 * i}" x2="${3.5 + 64 * i}" y1="64" y2="68" stroke="#ddd"/>`; });

  document.getElementById("chart").innerHTML = `
    <svg class="absolute left-0 top-0" width="1595" height="85">
      <rect x="2.500" y="2.500" width="1549" height="61" fill="#000" stroke="#e8e8e8"/>
      <line x1="3" x2="1551" y1="29.500" y2="29.500" stroke="#34a534" stroke-dasharray="9 6 3 6"/>
      <line x1="3" x2="1551" y1="44.500" y2="44.500" stroke="#a0a0a0"/>
      ${bars}${ticks}
      <path d="M1391 3h9l-4.500 5z" fill="#8a8a8a"/>
      <path d="M7 8h7l-3.500 4z" fill="#e8e8e8"/>
      <path d="M1552 28.500h3M1552 61.500h3" stroke="#ddd"/>
    </svg>
    <span class="absolute left-[18px] top-[4px] whitespace-pre">XAUUSD,H1  1904.35 1904.42 1902.07 1902.09</span>
    <span class="absolute left-[9px] top-[18px]">#1585023 buy 0.10</span>
    <div class="absolute left-0 top-[67px] flex text-[10px]">${labels.map(l => `<span class="w-[64px] pl-[1px]">${l}</span>`).join("")}</div>
    <span class="absolute left-[1557px] top-[23px]">1914.70</span>
    <span class="absolute left-[1555px] top-[38px] h-[13px] w-[40px] pl-[2px] leading-[13px] bg-white text-[#111]">1902.09</span>
    <span class="absolute left-[1557px] top-[55px]">1890.20</span>`;
</script>
</body>
</html>
